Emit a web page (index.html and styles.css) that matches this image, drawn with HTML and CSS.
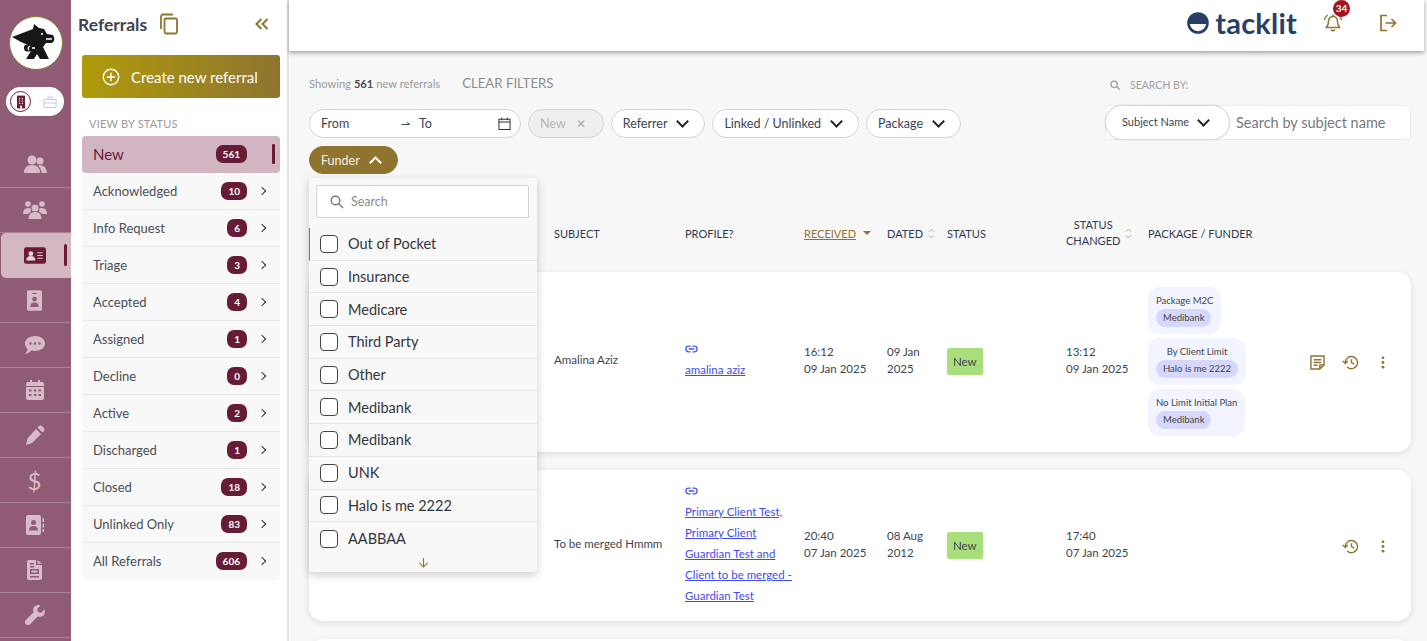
FILE: index.html
```html
<!DOCTYPE html>
<html lang="en">

<head>
    <meta charset="UTF-8" />
    <title>Referrals</title>
    <link rel="stylesheet" href="styles.css">
</head>

<body>
    <nav class="rail">
        <div class="rail-logo">
            <svg viewBox="0 0 52 52" width="52" height="52">
                <path d="M2 20 L23 12 L24 7 L29 11 L34 12 L37 17 L43 18 Q46 23 42 26 L36 26 L33 30 L39 42 L30 42 L27 37 L24 42 L16 42 L21 34 Q14 36 14 31 Q14 27 18 28 L11 25 Z" fill="#171717" />
                <circle cx="32" cy="17" r="1" fill="#fff" />
                <path d="M36 22 L42 22 M20 29 Q17 31 19 33 M22 31 L25 31" stroke="#fff" stroke-width="1.400" fill="none" />
            </svg>
        </div>
        <div class="rail-toggle">
            <span class="toggle-on">
                <svg viewBox="0 0 20 20" width="20" height="20"><path d="M5 2h10v16H5z" fill="#6a1b35" /><path d="M7.500 5h1.500v1.500H7.500zM11 5h1.500v1.500H11zM7.500 8h1.500v1.500H7.500zM11 8h1.500v1.500H11zM7.500 11h1.500v1.500H7.500zM11 11h1.500v1.500H11zM9 14.500h2V18H9z" fill="#fff" /></svg>
            </span>
            <svg class="toggle-off" viewBox="0 0 14 14" width="14" height="14"><path d="M1 4.500h12v8H1zM5 4.500V2h4v2.500M1 8h12" fill="none" stroke="#c3c9f0" stroke-width="1.100" /></svg>
        </div>
        <ul class="rail-list">
            <li><svg viewBox="0 0 24 24" width="24" height="24"><circle cx="9" cy="7" r="4.500" /><path d="M1 20q0-8 8-8t8 8z" /><circle cx="17" cy="8" r="3.500" /><path d="M15 12.500q8-1.500 9 7.500h-5.500q0-4-3.500-7.500z" /></svg></li>
            <li><svg viewBox="0 0 24 24" width="24" height="24"><circle cx="5" cy="6" r="2.800" /><circle cx="19" cy="6" r="2.800" /><circle cx="12" cy="10" r="3.500" /><path d="M0 16q0-6 5-6 2 0 3 1-1 2 0 3-2 1-3 2zM24 16q0-6-5-6-2 0-3 1 1 2 0 3 2 1 3 2zM5.500 21q0-7 6.500-7t6.500 7z" /></svg></li>
            <li class="rail-active"><svg viewBox="0 0 24 18" width="22" height="17"><rect width="24" height="18" rx="2.500" fill="#6a1b35" /><circle cx="7.500" cy="7" r="2.600" fill="#e6d6dd" /><path d="M3 14q0-4 4.500-4t4.500 4zM14.500 6h6M14.500 9h6M14.500 12h6" fill="#e6d6dd" stroke="#e6d6dd" stroke-width="1" /></svg></li>
            <li><svg viewBox="0 0 16 22" width="15" height="21"><path fill-rule="evenodd" d="M2 0h12a2 2 0 0 1 2 2v18a2 2 0 0 1-2 2H2a2 2 0 0 1-2-2V2a2 2 0 0 1 2-2zM5.500 3v1h5V3zM8 7a2.500 2.500 0 1 0 0 5 2.500 2.500 0 0 0 0-5zM3.500 18h9q0-5-4.500-5t-4.500 5z" /></svg></li>
            <li><svg viewBox="0 0 20 18" width="20" height="18"><path fill-rule="evenodd" d="M10 0c5.500 0 10 3 10 7.500S15.500 15 10 15c-1.500 0-2.500-.2-3.500-.5C5 16 3 17.500 0 18c1.500-1.500 2.500-3.500 2.500-5C1 11.500 0 9.500 0 7.500 0 3 4.500 0 10 0zM5.500 6.300a1.200 1.200 0 1 0 0 2.400 1.200 1.200 0 0 0 0-2.400zM10 6.300a1.200 1.200 0 1 0 0 2.400 1.200 1.200 0 0 0 0-2.400zM14.500 6.300a1.200 1.200 0 1 0 0 2.400 1.200 1.200 0 0 0 0-2.400z" /></svg></li>
            <li><svg viewBox="0 0 18 20" width="18" height="20"><path fill-rule="evenodd" d="M4 0h2v2h6V0h2v2h2a2 2 0 0 1 2 2v2H0V4a2 2 0 0 1 2-2h2zM0 7h18v11a2 2 0 0 1-2 2H2a2 2 0 0 1-2-2zM3 9.500v2h2.500v-2zM7.800 9.500v2h2.500v-2zM12.500 9.500v2H15v-2zM3 14v2h2.500v-2zM7.800 14v2h2.500v-2zM12.500 14v2H15v-2z" /></svg></li>
            <li><svg viewBox="0 0 20 20" width="20" height="20"><path d="M14 1q1.500-1 3 0l2 2q1 1.500 0 3l-1.500 1.500-5-5zM11 4l5 5-9 9-6 2 1.500-6.500z" /></svg></li>
            <li><span class="rail-dollar">$</span></li>
            <li><svg viewBox="0 0 18 20" width="18" height="20"><path fill-rule="evenodd" d="M2 0h11a2 2 0 0 1 2 2v16a2 2 0 0 1-2 2H2a2 2 0 0 1-2-2V2a2 2 0 0 1 2-2zM7.500 5a2.500 2.500 0 1 0 0 5 2.500 2.500 0 0 0 0-5zM3 15.500h9q0-4.500-4.500-4.500T3 15.500z" /><path d="M16.500 3H18v4h-1.500zM16.500 8.500H18v4h-1.500zM16.500 14H18v3h-1.500z" /></svg></li>
            <li><svg viewBox="0 0 15 20" width="15" height="20"><path fill-rule="evenodd" d="M2 0h7v5h6v13a2 2 0 0 1-2 2H2a2 2 0 0 1-2-2V2a2 2 0 0 1 2-2zM10.500 0L15 3.700h-4.500zM3 9v5h9V9zM4.500 10.500h6v2h-6zM3 16v1.500h9V16zM3 3v1.500h4V3zM3 6v1.500h4V6z" /></svg></li>
            <li><svg viewBox="0 0 20 20" width="20" height="20"><path d="M19.500 4.500l-3.500 3.300-3-.8-.8-3L15.500.5C12.800-.6 9.500.5 8.500 3c-.6 1.500-.4 3 .1 4.200L.8 15a2.900 2.900 0 0 0 4.200 4.200l7.800-7.800c1.300.5 2.800.6 4.200.1 2.500-1 3.600-4.300 2.500-7z" /></svg></li>
        </ul>
    </nav>

    <aside class="panel">
        <div class="panel-head">
            <h1>Referrals</h1>
            <svg class="copy-icon" viewBox="0 0 20 22" width="20" height="22"><path d="M14 1.500H4a2 2 0 0 0-2 2V16M7 5.500h9.500a1.500 1.500 0 0 1 1.500 1.500v12a1.500 1.500 0 0 1-1.500 1.500H7A1.500 1.500 0 0 1 5.500 19V7A1.500 1.500 0 0 1 7 5.500z" fill="none" stroke="#8f7430" stroke-width="1.800" /></svg>
            <svg class="collapse-icon" viewBox="0 0 14 12" width="14" height="12"><path d="M6.500 1L1.500 6l5 5M12.500 1l-5 5 5 5" fill="none" stroke="#8f7430" stroke-width="2" /></svg>
        </div>
        <button class="create-btn">
            <svg viewBox="0 0 18 18" width="18" height="18"><circle cx="9" cy="9" r="7.700" fill="none" stroke="#fff" stroke-width="1.400" /><path d="M9 4.800v8.400M4.800 9h8.400" stroke="#fff" stroke-width="1.400" /></svg>
            Create new referral
        </button>
        <div class="panel-label">VIEW BY STATUS</div>
        <ul class="status-list">
            <li class="status-new"><span class="status-name">New</span><b class="count">561</b><i class="status-bar"></i></li>
            <li><span class="status-name">Acknowledged</span><b class="count">10</b><span class="chev"></span></li>
            <li><span class="status-name">Info Request</span><b class="count">6</b><span class="chev"></span></li>
            <li><span class="status-name">Triage</span><b class="count">3</b><span class="chev"></span></li>
            <li><span class="status-name">Accepted</span><b class="count">4</b><span class="chev"></span></li>
            <li><span class="status-name">Assigned</span><b class="count">1</b><span class="chev"></span></li>
            <li><span class="status-name">Decline</span><b class="count">0</b><span class="chev"></span></li>
            <li><span class="status-name">Active</span><b class="count">2</b><span class="chev"></span></li>
            <li><span class="status-name">Discharged</span><b class="count">1</b><span class="chev"></span></li>
            <li><span class="status-name">Closed</span><b class="count">18</b><span class="chev"></span></li>
            <li><span class="status-name">Unlinked Only</span><b class="count">83</b><span class="chev"></span></li>
            <li><span class="status-name">All Referrals</span><b class="count">606</b><span class="chev"></span></li>
        </ul>
    </aside>

    <div class="page">
        <header class="topbar">
            <div class="brand">
                <svg viewBox="0 0 22 22" width="22" height="22"><circle cx="11" cy="11" r="9.500" fill="#fff" stroke="#2a3f66" stroke-width="2.600" /><path d="M1 12a10 10 0 0 1 20 0z" fill="#2a3f66" /></svg>
                <span>tacklit</span>
            </div>
            <div class="bell">
                <svg viewBox="0 0 20 20" width="20" height="20"><path d="M10 3.500c-3 0-4.500 2.500-4.500 5 0 3-1 4.500-2 6h13c-1-1.500-2-3-2-6 0-2.500-1.500-5-4.500-5zM8 16.500q2 2.500 4 0M10 1.500v2M1.500 7q.5-3 3-5M18.500 7q-.5-3-3-5" fill="none" stroke="#8f7430" stroke-width="1.500" /></svg>
                <b class="bell-count">34</b>
            </div>
            <svg class="logout" viewBox="0 0 18 18" width="18" height="18"><path d="M8 1.500H2v15h6M6.500 9h10M12.500 5l4 4-4 4" fill="none" stroke="#8f7430" stroke-width="1.700" /></svg>
        </header>

        <main class="content">
            <section class="filters">
                <div class="filters-left">
                    <div class="showing">
                        <span>Showing <b>561</b> new referrals</span>
                        <a class="clear">CLEAR FILTERS</a>
                    </div>
                    <div class="pills">
                        <div class="pill date-pill">
                            <span class="date-from">From</span>
                            <span class="date-arrow">⇀</span>
                            <span class="date-to">To</span>
                            <svg viewBox="0 0 14 14" width="13" height="13"><path d="M1 2.500h12v11H1zM1 5.500h12M4 .5v3M10 .5v3" fill="none" stroke="#333" stroke-width="1.100" /></svg>
                        </div>
                        <div class="pill pill-disabled">New <span class="pill-x">✕</span></div>
                        <div class="pill">Referrer <span class="chev-down"></span></div>
                        <div class="pill">Linked / Unlinked <span class="chev-down"></span></div>
                        <div class="pill">Package <span class="chev-down"></span></div>
                        <div class="pill pill-open">Funder <span class="chev-up"></span></div>
                    </div>
                </div>
                <div class="filters-right">
                    <div class="search-label">
                        <svg viewBox="0 0 12 12" width="10" height="10"><circle cx="5" cy="5" r="3.800" fill="none" stroke="#999" stroke-width="1.500" /><path d="M8 8l3.500 3.500" stroke="#999" stroke-width="1.500" /></svg>
                        SEARCH BY:
                    </div>
                    <div class="search-box">
                        <div class="search-select"><span class="search-select-text">Subject Name</span> <span class="chev-down"></span></div>
                        <span class="search-hint">Search by subject name</span>
                    </div>
                </div>

                <div class="funder-menu">
                    <div class="funder-search">
                        <svg viewBox="0 0 14 14" width="14" height="14"><circle cx="5.500" cy="5.500" r="4.300" fill="none" stroke="#777" stroke-width="1.400" /><path d="M8.700 8.700l4.300 4.300" stroke="#777" stroke-width="1.400" /></svg>
                        Search
                    </div>
                    <ul class="funder-list">
                        <li class="funder-first"><i class="check"></i>Out of Pocket</li>
                        <li><i class="check"></i>Insurance</li>
                        <li><i class="check"></i>Medicare</li>
                        <li><i class="check"></i>Third Party</li>
                        <li><i class="check"></i>Other</li>
                        <li><i class="check"></i>Medibank</li>
                        <li><i class="check"></i>Medibank</li>
                        <li><i class="check"></i>UNK</li>
                        <li><i class="check"></i>Halo is me 2222</li>
                        <li><i class="check"></i>AABBAA</li>
                    </ul>
                    <svg class="funder-more" viewBox="0 0 12 12" width="11" height="11"><path d="M6 1v10M1.500 6.500L6 11l4.500-4.500" fill="none" stroke="#8f7430" stroke-width="1.200" /></svg>
                </div>
            </section>

            <div class="table-head row-grid">
                <span></span>
                <span>SUBJECT</span>
                <span>PROFILE?</span>
                <span class="sorted">
                    <u>RECEIVED</u>
                    <i class="caret"></i>
                </span>
                <span class="sortable">DATED
                    <svg viewBox="0 0 8 12" width="7" height="11"><path d="M1 4l3-3 3 3M1 8l3 3 3-3" fill="none" stroke="#b9a566" stroke-width="1" /></svg>
                </span>
                <span>STATUS</span>
                <span class="sortable head-changed"><span>STATUS<br>CHANGED</span>
                    <svg viewBox="0 0 8 12" width="7" height="11"><path d="M1 4l3-3 3 3M1 8l3 3 3-3" fill="none" stroke="#b9a566" stroke-width="1" /></svg>
                </span>
                <span class="head-package">PACKAGE / FUNDER</span>
            </div>

            <article class="card card-one row-grid">
                <span></span>
                <span class="subject">Amalina Aziz</span>
                <span class="profile">
                    <svg viewBox="0 0 14 8" width="13" height="8"><path d="M6 1H4a3 3 0 0 0 0 6h2M8 1h2a3 3 0 0 1 0 6H8M4 4h6" fill="none" stroke="#4c56f0" stroke-width="1.400" /></svg>
                    <a>amalina aziz</a>
                </span>
                <span class="two-line">16:12<br>09 Jan 2025</span>
                <span class="two-line">09 Jan<br>2025</span>
                <span><b class="tag-new">New</b></span>
                <span class="two-line">13:12<br>09 Jan 2025</span>
                <div class="packages">
                    <div class="package"><span>Package M2C</span><b>Medibank</b></div>
                    <div class="package package-center"><span>By Client Limit</span><b>Halo is me 2222</b></div>
                    <div class="package"><span>No Limit Initial Plan</span><b>Medibank</b></div>
                </div>
                <div class="actions">
                    <svg viewBox="0 0 16 16" width="15" height="15"><path d="M1 1h14v9.500L10.500 15H1zM4 5h8M4 8h8M4 11h4M10.500 15v-4.500H15" fill="none" stroke="#8f7430" stroke-width="1.500" /></svg>
                    <svg viewBox="0 0 18 16" width="17" height="15"><path d="M3.500 8a6.500 6.500 0 1 1 2 4.800M.8 6.500l2.700 2.700 2.700-2.700M10 4.500V8l2.800 1.800" fill="none" stroke="#8f7430" stroke-width="1.500" /></svg>
                    <svg class="dots" viewBox="0 0 4 14" width="4" height="13"><circle cx="2" cy="2" r="1.500" /><circle cx="2" cy="7" r="1.500" /><circle cx="2" cy="12" r="1.500" /></svg>
                </div>
            </article>

            <article class="card card-two row-grid">
                <span></span>
                <span class="subject">To be merged Hmmm</span>
                <span class="profile">
                    <svg viewBox="0 0 14 8" width="13" height="8"><path d="M6 1H4a3 3 0 0 0 0 6h2M8 1h2a3 3 0 0 1 0 6H8M4 4h6" fill="none" stroke="#4c56f0" stroke-width="1.400" /></svg>
                    <a>Primary Client Test,<br>Primary Client<br>Guardian Test and<br>Client to be merged -<br>Guardian Test</a>
                </span>
                <span class="two-line">20:40<br>07 Jan 2025</span>
                <span class="two-line">08 Aug<br>2012</span>
                <span><b class="tag-new">New</b></span>
                <span class="two-line">17:40<br>07 Jan 2025</span>
                <div></div>
                <div class="actions">
                    <svg viewBox="0 0 18 16" width="17" height="15"><path d="M3.500 8a6.500 6.500 0 1 1 2 4.800M.8 6.500l2.700 2.700 2.700-2.700M10 4.500V8l2.800 1.800" fill="none" stroke="#8f7430" stroke-width="1.500" /></svg>
                    <svg class="dots" viewBox="0 0 4 14" width="4" height="13"><circle cx="2" cy="2" r="1.500" /><circle cx="2" cy="7" r="1.500" /><circle cx="2" cy="12" r="1.500" /></svg>
                </div>
            </article>

            <article class="card card-three"></article>
        </main>
    </div>
</body>

</html>
```

FILE: styles.css
```css
* {
    margin: 0;
    padding: 0;
    box-sizing: border-box;
}

html,
body {
    height: 100%;
    overflow: hidden;
}

body {
    display: flex;
    font-family: 'Lato', 'Noto Sans', sans-serif;
    color: #343a46;
    background: #fff;
}

ul {
    list-style: none;
}

/* left icon rail */
.rail {
    flex: 0 0 71px;
    height: 641px;
    background: #905b74;
    padding-top: 16px;
}

.rail-logo {
    width: 54px;
    height: 54px;
    margin: 0 auto;
    background: #fff;
    border: 1px solid #8f7430;
    border-radius: 50%;
    display: flex;
    align-items: center;
    justify-content: center;
}

.rail-toggle {
    width: 58px;
    height: 29px;
    margin: 17px 0 0 6px;
    background: #fff;
    border-radius: 15px;
    display: flex;
    align-items: center;
    gap: 12px;
    padding-left: 4px;
}

.toggle-on {
    width: 21px;
    height: 21px;
    border: 1px solid #6a1b35;
    border-radius: 50%;
    display: flex;
    align-items: center;
    justify-content: center;
}

.toggle-on svg {
    width: 16px;
    height: 16px;
}

.rail-list {
    margin-top: 27px;
}

.rail-list li {
    height: 45px;
    display: flex;
    align-items: center;
    justify-content: center;
    border-bottom: 1px solid #ab8295;
    fill: #d6bcc8;
    padding-right: 2px;
}

.rail-list .rail-active {
    position: relative;
    background: #d3b7c3;
    border-radius: 5px 0 0 5px;
    margin-left: 1px;
    border-bottom: 0;
}

.rail-active::after {
    content: '';
    position: absolute;
    right: 4px;
    top: 11px;
    width: 3px;
    height: 22px;
    background: #6a1b35;
    border-radius: 2px;
}

.rail-dollar {
    font-size: 24px;
    color: #d6bcc8;
}

/* status panel */
.panel {
    flex: 0 0 218px;
    height: 641px;
    background: #fff;
    border-right: 2px solid #e3e3e3;
    padding: 0 5px 0 11px;
}

.panel-head {
    height: 55px;
    display: flex;
    align-items: center;
    padding: 0 13px 7px 0;
    margin-left: -4px;
}

.panel-head h1 {
    font-size: 17.500px;
    font-weight: 700;
    color: #3d4450;
}

.copy-icon {
    margin-left: 12px;
}

.collapse-icon {
    margin-left: auto;
}

.create-btn {
    width: 198px;
    height: 43px;
    border: 0;
    border-radius: 3px;
    background: linear-gradient(to right, #b09a0a, #8f7430);
    color: #fff;
    font-family: inherit;
    font-size: 15px;
    display: flex;
    align-items: center;
    gap: 11px;
    padding-left: 20px;
}

.panel-label {
    font-size: 11px;
    color: #9a9a9a;
    padding: 19px 0 6px 7px;
    letter-spacing: 0.2px;
}

.status-list {
    width: 198px;
    background: #f8f8f8;
    border-radius: 5px;
}

.status-list li {
    height: 37px;
    display: flex;
    align-items: center;
    padding: 0 15px 0 11px;
    border-bottom: 1px solid #e8e8e8;
    font-size: 13px;
    color: #4a4e57;
}

.status-list li:last-child {
    border-bottom: 0;
    padding-bottom: 2px;
}

.status-name {
    flex: 1;
}

.status-list .status-new {
    background: #d2b5c2;
    border-radius: 4px;
    border-bottom: 0;
    font-size: 15px;
    color: #6a1b35;
    padding-right: 5px;
    padding-bottom: 2px;
}

.count {
    min-width: 19px;
    height: 18px;
    padding: 0 7px;
    background: #661c35;
    color: #fff;
    border-radius: 7px;
    font-size: 10px;
    line-height: 18px;
    text-align: center;
}

.status-bar {
    width: 3px;
    height: 20px;
    margin-left: 25px;
    background: #6a1b35;
    border-radius: 1px;
}

.chev {
    width: 6px;
    height: 6px;
    margin-left: 12px;
    border-top: 1.500px solid #333;
    border-right: 1.500px solid #333;
    transform: rotate(45deg);
}

/* right page */
.page {
    flex: 1;
    min-width: 0;
    height: 641px;
    background: #f7f7f7;
    padding-right: 3px;
}

.topbar {
    height: 51px;
    background: #fff;
    display: flex;
    align-items: center;
    justify-content: flex-end;
    padding: 0 27px 6px 0;
    box-shadow: 0 2px 4px rgba(0, 0, 0, 0.35);
    position: relative;
}

.brand {
    display: flex;
    align-items: center;
    gap: 6px;
    color: #2a3f66;
    font-size: 29px;
    font-weight: 700;
    letter-spacing: 0.2px;
}

.bell {
    position: relative;
    margin-left: 26px;
    height: 20px;
}

.bell-count {
    position: absolute;
    left: 10px;
    top: -13px;
    width: 17px;
    height: 17px;
    border-radius: 50%;
    background: #a3141e;
    color: #fff;
    font-size: 10px;
    line-height: 17px;
    text-align: center;
}

.logout {
    margin-left: 36px;
}

.content {
    padding: 0 13px 0 20px;
    height: 590px;
    overflow: hidden;
}

.filters {
    position: relative;
    display: flex;
    height: 131px;
}

.filters-left {
    width: 660px;
}

.showing {
    display: flex;
    align-items: center;
    gap: 22px;
    font-size: 11.200px;
    color: #9a9a9a;
    padding-top: 6px;
    height: 58px;
}

.showing b {
    color: #4a4e57;
}

.clear {
    font-size: 13.200px;
    color: #8e8e8e;
}

.pills {
    display: flex;
    flex-wrap: wrap;
    gap: 8px 7px;
}

.pill {
    height: 29px;
    padding: 0 17px 0 11px;
    background: #fff;
    border: 1px solid #d5d5d5;
    border-radius: 15px;
    display: flex;
    align-items: center;
    gap: 11px;
    font-size: 12.500px;
    color: #3d4450;
}

.date-pill {
    width: 212px;
    gap: 0;
    padding-right: 9px;
}

.date-from {
    width: 80px;
}

.date-arrow {
    width: 18px;
    font-size: 11px;
}

.date-to {
    flex: 1;
}

.pill-disabled {
    background: #efefef;
    color: #b8b8b8;
}

.pill-x {
    font-size: 12px;
    color: #a8a8a8;
    margin-left: -1px;
}

.pill-open {
    height: 28px;
    background: #8f7430;
    border-color: #8f7430;
    color: #f4efe0;
}

.chev-down,
.chev-up {
    width: 9px;
    height: 9px;
    border-right: 2px solid #222;
    border-bottom: 2px solid #222;
    transform: translateY(-2px) rotate(45deg);
}

.chev-up {
    border-color: #fff;
    transform: translateY(2px) rotate(225deg);
}

.filters-right {
    margin-left: auto;
    width: 306px;
    padding-top: 28px;
}

.search-label {
    display: flex;
    align-items: center;
    gap: 10px;
    padding-left: 5px;
    font-size: 10.500px;
    color: #a0a0a0;
}

.search-box {
    margin-top: 14px;
    height: 35px;
    background: #fff;
    border: 1px solid #ececec;
    border-radius: 4px;
    display: flex;
    align-items: center;
}

.search-select {
    width: 125px;
    height: 35px;
    background: #fff;
    border: 1px solid #d8d8d8;
    border-radius: 18px;
    display: flex;
    align-items: center;
    gap: 10px;
    padding-left: 16px;
    font-size: 11px;
    color: #3d4450;
    margin-left: -1px;
    box-shadow: 0 0 2px rgba(0, 0, 0, 0.15);
}

.search-select-text {
    padding-bottom: 3px;
}

.search-hint {
    padding-left: 6px;
    font-size: 14.500px;
    color: #77797e;
}

/* funder dropdown, sits over the table */
.funder-menu {
    position: absolute;
    left: 0;
    top: 127px;
    z-index: 5;
    width: 228px;
    height: 394px;
    background: #f8f8f8;
    border-radius: 3px;
    padding-top: 7px;
    box-shadow: 0 3px 10px rgba(0, 0, 0, 0.2);
}

.funder-search {
    width: 213px;
    height: 33px;
    margin-left: 7px;
    background: #fff;
    border: 1px solid #d4d4d4;
    border-radius: 2px;
    display: flex;
    align-items: center;
    gap: 7px;
    padding-left: 13px;
    font-size: 12.500px;
    color: #8c8c8c;
}

.funder-list {
    margin-top: 10px;
}

.funder-list li {
    height: 32.700px;
    display: flex;
    align-items: center;
    gap: 10px;
    padding-left: 11px;
    border-bottom: 1px solid #e6e6e6;
    font-size: 14.500px;
    color: #33363c;
}

.funder-list li:last-child {
    border-bottom: 0;
}

.funder-list .funder-first {
    border-left: 1px solid #8f7430;
    padding-left: 10px;
}

.check {
    width: 18px;
    height: 18px;
    background: #fff;
    border: 1px solid #444;
    border-radius: 4px;
}

.funder-more {
    display: block;
    margin: 2px auto 0;
}

/* table rows */
.row-grid {
    display: grid;
    grid-template-columns: 245px 131px 119px 83px 60px 119px 82px 157px 1fr;
    align-items: center;
}

.table-head {
    height: 90px;
    font-size: 11px;
    color: #2f3a52;
    padding-top: 12px;
}

.head-package {
    white-space: nowrap;
}

.sorted {
    color: #8f7430;
    display: flex;
    align-items: center;
    gap: 7px;
}

.caret {
    width: 0;
    height: 0;
    border: 4px solid transparent;
    border-top: 4px solid #8f7430;
    border-bottom: 0;
}

.sortable {
    display: flex;
    align-items: center;
    gap: 5px;
}

.head-changed span {
    text-align: center;
    line-height: 16px;
}

.card {
    background: #fff;
    border-radius: 14px;
    box-shadow: 0 2px 6px rgba(0, 0, 0, 0.1);
    margin-bottom: 18px;
    font-size: 11.500px;
    color: #40444d;
}

.card-one {
    height: 180px;
    padding-bottom: 2px;
}

.card-two {
    height: 151px;
}

.card-three {
    height: 60px;
}

.subject {
    padding-bottom: 4px;
}

.two-line {
    line-height: 17px;
    padding-bottom: 3px;
}

.profile {
    display: flex;
    flex-direction: column;
    align-items: flex-start;
    gap: 6px;
    padding-top: 2px;
    line-height: 21px;
}

.profile a {
    color: #3d4cf0;
    text-decoration: underline;
}

.tag-new {
    display: inline-block;
    padding: 0 6px;
    height: 27px;
    line-height: 27px;
    background: #a8df7b;
    border-radius: 2px;
    font-weight: 400;
    color: #3d4450;
}

.packages {
    display: flex;
    flex-direction: column;
    align-items: flex-start;
    gap: 4px;
    font-size: 9.500px;
}

.package {
    background: #f2f4ff;
    border-radius: 12px;
    height: 47px;
    padding: 8px 8px 0;
    display: flex;
    flex-direction: column;
    align-items: flex-start;
    gap: 3px;
}

.package-center span {
    align-self: center;
}

.package b {
    font-weight: 400;
    background: #d5d8fa;
    border-radius: 9px;
    height: 18px;
    line-height: 18px;
    padding: 0 7px;
}

.actions {
    display: flex;
    align-items: center;
    justify-content: flex-end;
    gap: 17px;
    padding: 2px 26px 0 0;
}

.dots {
    fill: #8f7430;
    margin-left: 5px;
}
```
